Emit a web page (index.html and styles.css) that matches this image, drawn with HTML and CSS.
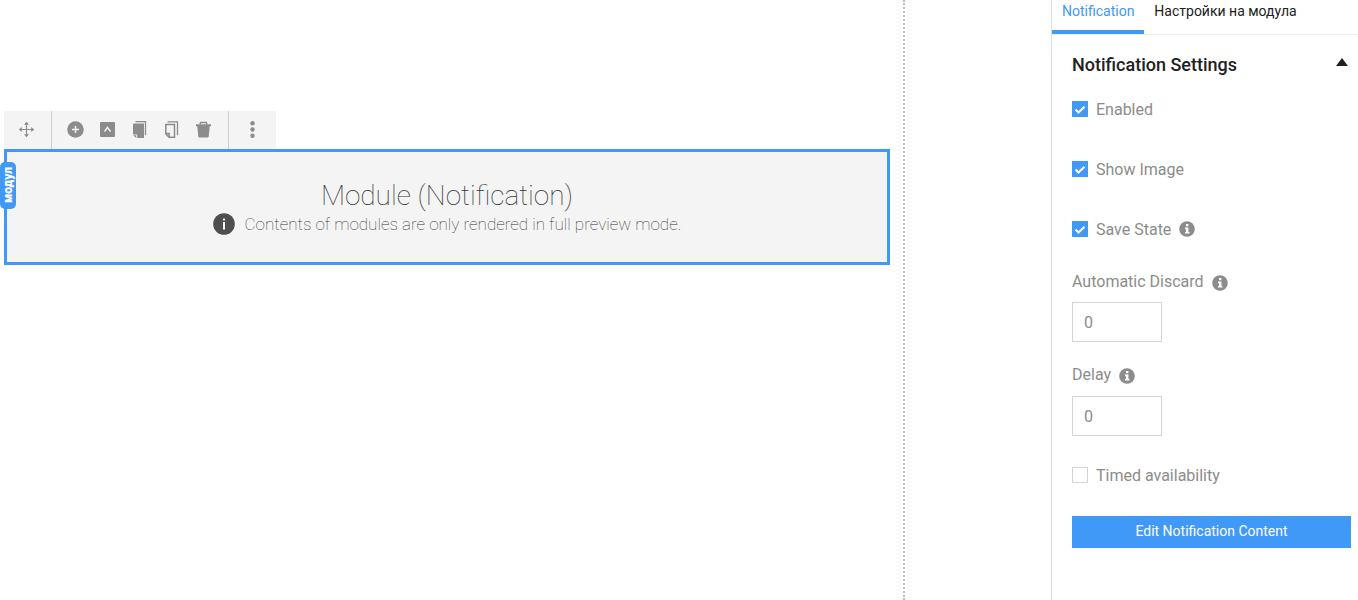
FILE: index.html
```html
<!DOCTYPE html>
<html lang="bg">
<head>
<meta charset="utf-8">
<title>Module editor</title>
<link rel="stylesheet" href="styles.css">
</head>
<body>
<svg class="sprite" aria-hidden="true">
  <symbol id="info" viewBox="0 0 16 16">
    <circle cx="8" cy="8" r="7.8" fill="currentColor"/>
    <path d="M7 3h2.4v2.3H7zM6 6.6h3.4v4.3h1v1.6H6v-1.6h1V8.2H6z" fill="#fff"/>
  </symbol>
</svg>
<div class="editor">
  <main class="stage">
    <div class="canvas">
      <div class="toolbar" role="toolbar" aria-label="Module actions">
        <div class="tool-group">
          <button class="tool" type="button" aria-label="Move"><svg viewBox="0 0 18 18"><path d="M8.5 2v13M2 8.500h13" fill="none" stroke="currentColor" stroke-width="1.200"/><path d="M8.500 .8 11 3.800H6zM8.500 16.200 11 13.200H6zM.8 8.500l3-2.500v5zM16.200 8.500l-3-2.500v5z" fill="currentColor"/></svg></button>
        </div>
        <div class="tool-group">
          <button class="tool" type="button" aria-label="Add"><svg viewBox="0 0 18 18"><circle cx="8.500" cy="8.500" r="8.300" fill="currentColor"/><path d="M8.500 5v7M5 8.500h7" stroke="#f4f4f4" stroke-width="1.500"/></svg></button>
          <button class="tool" type="button" aria-label="Select parent"><svg viewBox="0 0 18 18"><rect x="1" y="1" width="15" height="15" rx="1" fill="currentColor"/><path d="m5.500 10.500 3-4 3 4" fill="none" stroke="#f4f4f4" stroke-width="1.400"/></svg></button>
          <button class="tool" type="button" aria-label="Copy"><svg viewBox="0 0 18 18"><path d="M3 2.500h10V17H6.200v-3.500H2v-10q0-1 1-1z" fill="currentColor"/><path d="M2 14.300h3.300V17z" fill="currentColor"/><path d="M4.500 .7h10v13.500" fill="none" stroke="currentColor" stroke-width="1.300"/></svg></button>
          <button class="tool" type="button" aria-label="Duplicate"><svg viewBox="0 0 18 18"><path d="M2.800 3.500h8.700v12.700H6L2.800 13zM2.800 12.500h3.400v3.700" fill="none" stroke="currentColor" stroke-width="1.500"/><path d="M4.500 .8h10v13.500" fill="none" stroke="currentColor" stroke-width="1.300"/></svg></button>
          <button class="tool" type="button" aria-label="Delete"><svg viewBox="0 0 18 18"><path d="M1 3.300h15v2H1zM2.300 5h12.400l-1 10.500q-.1 1-1.200 1h-8q-1.100 0-1.200-1z" fill="currentColor"/><path d="M5 3.500 5.500 1.500h6l.5 2" fill="none" stroke="currentColor" stroke-width="1.300"/></svg></button>
        </div>
        <div class="tool-group">
          <button class="tool" type="button" aria-label="More"><svg viewBox="0 0 18 18"><g fill="currentColor"><circle cx="8.500" cy="2.300" r="2.200"/><circle cx="8.500" cy="8.500" r="2.200"/><circle cx="8.500" cy="14.700" r="2.200"/></g></svg></button>
        </div>
      </div>
      <section class="module">
        <span class="module-tag">модул</span>
        <h1 class="module-title">Module (Notification)</h1>
        <p class="module-note">
          <svg class="note-icon" viewBox="0 0 22 22" aria-hidden="true"><circle cx="11" cy="11" r="10.800" fill="#4f4f4f"/><path d="M10 5.500h2v2h-2zM10 9h2v7.500h-2z" fill="#f4f4f4"/></svg>
          <span>Contents of modules are only rendered in full preview mode.</span>
        </p>
      </section>
    </div>
  </main>
  <aside class="panel">
    <div class="tabs" role="tablist">
      <button class="tab tab-active" type="button" role="tab" aria-selected="true">Notification</button>
      <button class="tab" type="button" role="tab" aria-selected="false">Настройки на модула</button>
    </div>
    <form class="settings">
      <div class="settings-head">
        <h2 class="settings-title">Notification Settings</h2>
        <button class="collapse" type="button" aria-label="Collapse"><svg viewBox="0 0 12 8"><path d="M6 0l6 8H0z" fill="currentColor"/></svg></button>
      </div>
      <div class="check-row"><input class="check" type="checkbox" id="enabled" checked><label for="enabled">Enabled</label></div>
      <div class="check-row"><input class="check" type="checkbox" id="image" checked><label for="image">Show Image</label></div>
      <div class="check-row"><input class="check" type="checkbox" id="state" checked><label for="state">Save State</label><svg class="info"><use href="#info"/></svg></div>
      <div class="field">
        <div class="field-label"><label for="discard">Automatic Discard</label><svg class="info"><use href="#info"/></svg></div>
        <input class="number" id="discard" type="text" inputmode="numeric" value="0">
      </div>
      <div class="field">
        <div class="field-label"><label for="delay">Delay</label><svg class="info"><use href="#info"/></svg></div>
        <input class="number" id="delay" type="text" inputmode="numeric" value="0">
      </div>
      <div class="check-row"><input class="check" type="checkbox" id="timed"><label for="timed">Timed availability</label></div>
      <button class="primary" type="button">Edit Notification Content</button>
    </form>
  </aside>
</div>
</body>
</html>
```
FILE: styles.css
```css
* { box-sizing: border-box; }
body {
  margin: 0;
  background: #fff;
  color: #212121;
  font-family: Roboto, "Liberation Sans", sans-serif;
}
button, input { font: inherit; }
button { border: 0; padding: 0; background: none; color: inherit; cursor: pointer; }
.sprite { position: absolute; width: 0; height: 0; }

.editor { display: flex; min-height: 100vh; }
.stage { display: flex; flex: 1; padding-right: 146px; }
.canvas {
  flex: 1;
  padding: 111px 13px 0 4px;
  border-right: 2px dotted #bdbdbd;
}

.toolbar { display: flex; width: fit-content; height: 38px; background: #f4f4f4; color: #8c8c8c; }
.tool-group { display: flex; align-items: center; padding: 0 8px 0 7px; }
.tool-group + .tool-group { padding-left: 8px; border-left: 1px solid #cfcfcf; }
.tool-group:last-child { padding: 0 7px 0 8px; }
.tool { display: grid; place-items: center; width: 32px; height: 38px; }
.tool svg { width: 18px; height: 18px; }

.module {
  position: relative;
  padding: 28px 16px 26px;
  border: 3px solid #4098f7;
  background: #f4f4f4;
  color: #333;
  text-align: center;
}
.module-tag {
  position: absolute;
  top: 10px;
  left: -7px;
  width: 16px;
  height: 47px;
  border-radius: 5px;
  background: #4098f7;
  color: #fff;
  font-size: 12px;
  font-weight: 900;
  line-height: 16px;
  writing-mode: vertical-rl;
  transform: rotate(180deg);
}
.module-title { margin: 0; font-size: 28px; font-weight: 100; line-height: 32px; }
.module-note {
  display: flex;
  justify-content: center;
  align-items: center;
  gap: 10px;
  margin: 0;
  font-size: 17px;
  font-weight: 100;
  line-height: 24px;
}
.note-icon { width: 22px; height: 22px; }

.panel { width: 307px; border-left: 1px solid #e0e0e0; }
.tabs { display: flex; height: 35px; border-bottom: 1px solid #eee; }
.tab { height: 34px; padding: 0 10px 8px; border-bottom: 4px solid transparent; font-size: 14px; line-height: 22px; }
.tab-active { border-color: #4098f7; color: #4098f7; }

.settings { padding: 16px 7px 20px 20px; color: #8c8c8c; font-size: 16px; font-weight: 400; }
.settings-head { display: flex; justify-content: space-between; align-items: center; height: 26px; padding-right: 3px; margin-bottom: 20px; color: #212121; }
.settings-title { margin: 0; font-size: 18px; font-weight: 500; }
.collapse svg { display: block; width: 12px; height: 8px; margin-bottom: 4px; }
.check-row { display: flex; align-items: center; gap: 8px; height: 24px; margin-bottom: 36px; }
.check {
  appearance: none;
  width: 16px;
  height: 16px;
  margin: 0;
  border: 1px solid #d4d4d4;
  background: #fff;
}
.check:checked {
  border: 0;
  background: #4098f7 url("data:image/svg+xml,%3Csvg xmlns='http://www.w3.org/2000/svg' viewBox='0 0 16 16'%3E%3Cpath d='m3.500 8.500 3 3 6-5.800' fill='none' stroke='white' stroke-width='2'/%3E%3C/svg%3E");
}
.info { width: 16px; height: 16px; }
.field { margin-bottom: 20px; }
.check-row + .field { margin-top: -8px; }
.field-label { display: flex; align-items: center; gap: 8px; height: 24px; margin-bottom: 9px; }
.field + .field .field-label { margin-bottom: 10px; }
.field-label .info { margin-top: 3px; }
.number {
  display: block;
  width: 90px;
  height: 40px;
  padding: 0 11px;
  border: 1px solid #d4d4d4;
  color: #8c8c8c;
}
.field + .check-row { margin: 27px 0 29px; }
.primary { width: 100%; height: 32px; padding-bottom: 2px; background: #4098f7; color: #fff; font-size: 14px; }
```
